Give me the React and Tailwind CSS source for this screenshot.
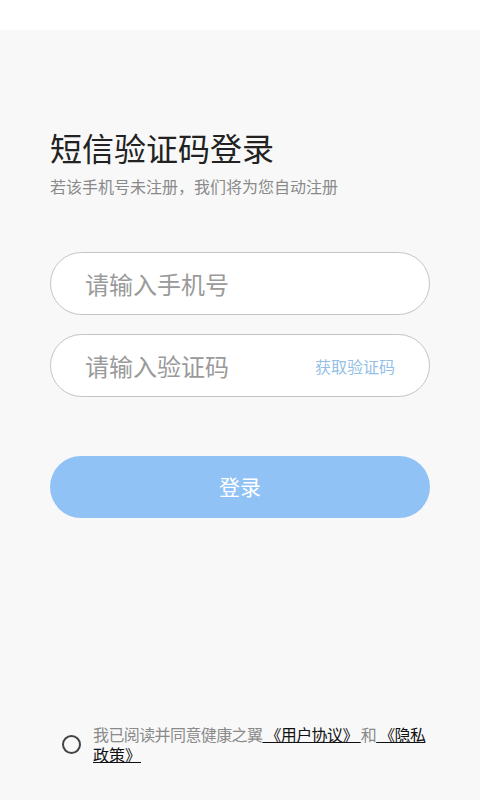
import React from "react";

export default function App() {
  return (
    <div
      className="w-[480px] h-[800px] flex flex-col bg-white"
      style={{ fontFamily: '"Noto Sans CJK SC", "Noto Sans", sans-serif' }}
    >
      <div className="h-[30px] bg-white" />

      <div className="flex-1 flex flex-col bg-[#f8f8f8] px-[50px] pt-[97px]">
        <h1 className="text-[32px] leading-[40px] text-[#222222] font-normal">
          短信验证码登录
        </h1>
        <p className="mt-[9px] text-[16px] leading-[20px] text-[#8a8a8a]">
          若该手机号未注册，我们将为您自动注册
        </p>

        <div className="mt-[56px] h-[63px] rounded-full border border-[#c4c4c4] bg-white flex items-center pl-[34px] pr-[34px]">
          <span className="text-[24px] text-[#9a9a9a]">请输入手机号</span>
        </div>

        <div className="mt-[19px] h-[63px] rounded-full border border-[#c4c4c4] bg-white flex items-center justify-between pl-[34px] pr-[34px]">
          <span className="text-[24px] text-[#9a9a9a]">请输入验证码</span>
          <span className="text-[16px] text-[#94bfe6]">获取验证码</span>
        </div>

        <button className="mt-[59px] h-[62px] rounded-full bg-[#90c2f6] text-white text-[21px] flex items-center justify-center">
          登录
        </button>

        <div className="mt-auto pb-[36px] pl-[12px] flex items-center gap-[12px]">
          <div className="w-[19px] h-[19px] shrink-0 rounded-full border-2 border-[#444444]" />
          <p className="text-[16px] leading-[20px] text-[#8a8a8a]">
            <span className="whitespace-nowrap tracking-[-0.6px]">
              我已阅读并同意健康之翼
              <span className="underline text-[#111111]"> 《用户协议》 </span>和
              <span className="underline text-[#111111]"> 《隐私</span>
            </span>
            <br />
            <span className="underline text-[#111111]">政策》 </span>
          </p>
        </div>
      </div>
    </div>
  );
}
